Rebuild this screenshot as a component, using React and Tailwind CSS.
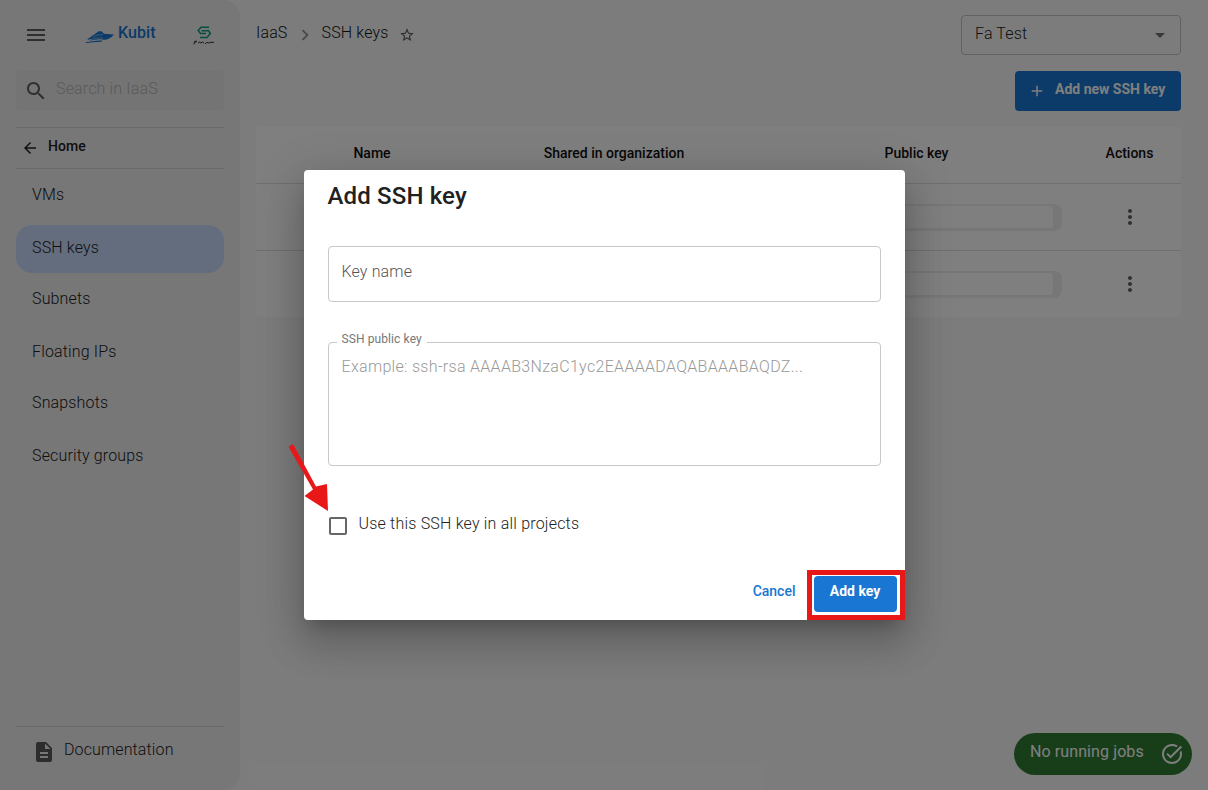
import React from 'react';

const icon = {
  menu: 'M3 18h18v-2H3v2zm0-5h18v-2H3v2zm0-7v2h18V6H3z',
  search:
    'M15.5 14h-.79l-.28-.27C15.41 12.59 16 11.11 16 9.5 16 5.91 13.09 3 9.5 3S3 5.91 3 9.5 5.91 16 9.5 16c1.61 0 3.09-.59 4.23-1.57l.27.28v.79l5 4.99L20.49 19l-4.99-5zm-6 0C7.01 14 5 11.99 5 9.5S7.01 5 9.5 5 14 7.01 14 9.5 11.99 14 9.5 14z',
  back: 'M20 11H7.83l5.59-5.59L12 4l-8 8 8 8 1.41-1.41L7.83 13H20v-2z',
  chevron: 'M10 6 8.59 7.41 13.17 12l-4.58 4.59L10 18l6-6z',
  star: 'M22 9.24l-7.19-.62L12 2 9.19 8.63 2 9.24l5.46 4.73L5.82 21 12 17.27 18.18 21l-1.63-7.03L22 9.24zM12 15.4l-3.76 2.27 1-4.28-3.32-2.88 4.38-.38L12 6.1l1.71 4.04 4.38.38-3.32 2.88 1 4.28L12 15.4z',
  dropdown: 'M7 10l5 5 5-5z',
  add: 'M19 13h-6v6h-2v-6H5v-2h6V5h2v6h6v2z',
  more: 'M12 8c1.1 0 2-.9 2-2s-.9-2-2-2-2 .9-2 2 .9 2 2 2zm0 2c-1.1 0-2 .9-2 2s.9 2 2 2 2-.9 2-2-.9-2-2-2zm0 6c-1.1 0-2 .9-2 2s.9 2 2 2 2-.9 2-2-.9-2-2-2z',
  doc: 'M14 2H6c-1.1 0-1.99.9-1.99 2L4 20c0 1.1.89 2 1.99 2H18c1.1 0 2-.9 2-2V8l-6-6zm2 16H8v-2h8v2zm0-4H8v-2h8v2zm-3-5V3.5L18.5 9H13z',
  done: 'M22 5.18 10.59 16.6l-4.24-4.24 1.41-1.41 2.83 2.83 10-10L22 5.18zm-2.21 5.04c.13.57.21 1.17.21 1.78 0 4.42-3.58 8-8 8s-8-3.58-8-8 3.58-8 8-8c1.58 0 3.04.46 4.28 1.25l1.44-1.44C16.1 2.67 14.13 2 12 2 6.48 2 2 6.48 2 12s4.48 10 10 10 10-4.48 10-10c0-1.19-.22-2.33-.6-3.39l-1.61 1.61z',
  box: 'M19 5v14H5V5h14m0-2H5c-1.1 0-2 .9-2 2v14c0 1.1.9 2 2 2h14c1.1 0 2-.9 2-2V5c0-1.1-.9-2-2-2z',
};

function Icon({ name, className }) {
  return (
    <svg viewBox="0 0 24 24" fill="currentColor" className={`shrink-0 ${className}`}>
      <path d={icon[name]} />
    </svg>
  );
}

function Sidebar() {
  return (
    <aside className="flex w-60 shrink-0 flex-col rounded-r-[16px] bg-[#eeeef0] px-4">
      <div className="flex h-[71px] items-center">
        <Icon name="menu" className="-mt-0.5 ml-2 size-6 text-[#5f5f5f]" />
        <div className="ml-[37px] flex w-[72px] items-center">
          <svg viewBox="0 0 30 14" className="mt-0.5 h-[14px] w-[30px] shrink-0" fill="#1976d2">
            <path d="M3 8.600C5.500 7.600 7.500 5 9.500 4.200L12 2.600C13 1.200 15 .8 17 1.700L19 3.700L29 4.400C26 8 21.500 10.600 17.500 9.600C13 8.800 9 10 4 11L7 9.300L2.500 9.800Z" />
            <path d="M.8 12.500C7 12.400 11 10.500 17 11.200" fill="none" stroke="#1976d2" strokeWidth="1.200" />
            <path d="M7.500 6.900Q12.500 4.300 18 4.600M4 10Q11 7.200 18 8" fill="none" stroke="#eeeef0" strokeWidth=".5" />
          </svg>
          <span className="-mt-[5px] ml-[3px] text-[16px] font-medium tracking-[0.1px] text-[#1976d2]">Kubit</span>
        </div>
        <svg viewBox="0 0 22 20" className="ml-[36px] h-5 w-[22px] shrink-0" fill="none">
          <path d="M16 1.300H8L5.200 4.500L7.500 7.500H13M8.500 4.800H15.500L17.300 7.500L14 11.500H7" stroke="#0d9f83" strokeWidth="1.600" />
          <path d="M1 18.500L1.500 15.500L3.500 15L2.500 16.800M5 17L6.500 16L8 17L9.500 16L11 17M12 18L14 16.300L15.500 17L18 16.300L21 16.300" stroke="#222" strokeWidth=".9" />
        </svg>
      </div>
      <div className="flex h-10 items-center rounded bg-[#e9e9e9] pl-2">
        <Icon name="search" className="size-6 text-[#5f5f5f]" />
        <span className="ml-2 pb-1 text-[16px] font-light tracking-[0.15px] text-[#b4b4b5]">Search in IaaS</span>
      </div>
      <div className="mt-4 flex h-[42px] items-center border-y border-[#d2d2d4] pl-[5px]">
        <Icon name="back" className="size-[18px] text-[#222]" />
        <span className="ml-[9px] pb-[3px] text-[14px] font-medium tracking-[0.1px] text-[#222]">Home</span>
      </div>
      <nav className="flex flex-col text-[16px] font-light tracking-[0.15px] text-[#202020]">
        <div className="flex h-[56px] items-center pb-1 pl-4">VMs</div>
        <div className="flex h-12 items-center rounded-[16px] bg-[#c8dafd] pb-0.5 pl-4">SSH keys</div>
        <div className="flex h-[52px] items-center pl-4">Subnets</div>
        <div className="flex h-[52px] items-center pt-0.5 pl-4">Floating IPs</div>
        <div className="flex h-[52px] items-center pl-4">Snapshots</div>
        <div className="flex h-[52px] items-center pt-0.5 pl-4">Security groups</div>
      </nav>
      <div className="mt-auto mb-3.5 flex h-[50px] items-center border-t border-[#d2d2d4] pl-4">
        <Icon name="doc" className="size-6 text-[#5a5a5a]" />
        <span className="ml-2 pb-1 text-[16px] font-light tracking-[0.12px] text-[#222]">Documentation</span>
      </div>
    </aside>
  );
}

const columns = 'grid grid-cols-[232px_252px_353px_73px]';

function Row() {
  return (
    <div className={`${columns} h-[67px] items-center border-t border-[#dedede]`}>
      <span />
      <span />
      <div className="ml-auto mr-[31px] flex h-[27px] w-[250px] items-center justify-end rounded-[8px] bg-[#eeeef0] pr-[9px]">
        <span className="h-[22px] w-[230px] rounded-[3px] bg-white" />
      </div>
      <Icon name="more" className="mx-auto size-6 text-[#606060]" />
    </div>
  );
}

function Dialog() {
  return (
    <section className="relative flex h-[450px] w-[601px] flex-col rounded bg-white px-6 shadow-[0_11px_15px_-7px_rgba(0,0,0,.2),0_24px_38px_3px_rgba(0,0,0,.14),0_9px_46px_8px_rgba(0,0,0,.12)]">
      <h1 className="mt-[10px] text-[24px] leading-8 font-medium tracking-[0.15px] text-[#212121]">Add SSH key</h1>
      <div className="mt-[34px] flex h-14 items-center rounded border border-[#c8c8c8] px-[13px] pb-1 text-[16px] font-light tracking-[0.15px] text-[#555]">
        Key name
      </div>
      <fieldset className="mt-[30px] h-[134px] rounded border border-[#c8c8c8] px-[8px]">
        <legend className="h-5 px-[5px] text-[12px] leading-[14px] tracking-[0.1px] text-[#777]">SSH public key</legend>
        <p className="px-[5px] pt-[3px] text-[16px] leading-6 font-light tracking-[0.31px] text-[#999]">
          Example: ssh-rsa AAAAB3NzaC1yc2EAAAADAQABAAABAQDZ...
        </p>
      </fieldset>
      <label className="mt-[48px] flex h-6 items-center">
        <Icon name="box" className="-ml-[2px] size-6 text-[#666]" />
        <span className="ml-[9px] pb-1 text-[16px] font-light tracking-[0.2px] text-[#222]">Use this SSH key in all projects</span>
      </label>
      <div className="-mr-[24px] mt-auto flex items-center justify-end">
        <span className="mr-[11px] pb-[7px] text-[14px] font-medium text-[#1976d2]">Cancel</span>
        <div className="border-[5px] border-[#e81818] bg-white pt-px pr-[3px] pb-[3px] pl-[2px]">
          <button className="flex h-9 w-[83px] justify-center rounded bg-[#1976d2] pt-[5px] text-[14px] leading-5 font-bold text-white">Add key</button>
        </div>
      </div>
    </section>
  );
}

export default function App() {
  return (
    <div className="relative flex h-[790px] w-[1208px] overflow-hidden bg-[#f9f9fb] font-['Roboto',sans-serif]">
      <Sidebar />
      <main className="flex flex-1 flex-col pt-[15px] pr-[27px] pl-4">
        <header className="flex h-10 items-center justify-between">
          <div className="flex items-center text-[16px] font-light tracking-[0.15px] text-[#111]">
            <span className="pb-1">IaaS</span>
            <Icon name="chevron" className="ml-[6px] size-[22px] text-[#929292]" />
            <span className="ml-[6px] pb-1">SSH keys</span>
            <Icon name="star" className="ml-[10px] size-4 text-[#555]" />
          </div>
          <div className="flex h-10 w-[220px] items-center justify-between rounded border border-[#c3c3c5] pr-2 pl-[13px]">
            <span className="pb-0.5 text-[16px] font-light tracking-[0.15px] text-[#222]">Fa Test</span>
            <Icon name="dropdown" className="size-6 text-[#707070]" />
          </div>
        </header>
        <button className="mt-4 ml-auto flex h-10 w-[166px] items-center rounded bg-[#1976d2] pl-[13px] text-white">
          <Icon name="add" className="size-[18px]" />
          <span className="ml-[9px] pb-[3px] text-[14px] font-bold">Add new SSH key</span>
        </button>
        <section className="mt-4 rounded bg-white">
          <div className={`${columns} h-14 items-center pb-[3px] text-center text-[14px] font-medium text-[#111]`}>
            <span>Name</span>
            <span>Shared in organization</span>
            <span>Public key</span>
            <span>Actions</span>
          </div>
          <Row />
          <Row />
        </section>
        <div className="mt-auto mb-[15px] -mr-[11px] flex h-[42px] w-[178px] items-center self-end rounded-full bg-[#2e7d32] pl-4 text-white">
          <span className="pb-1 text-[16px] tracking-[0.1px]">No running jobs</span>
          <Icon name="done" className="ml-auto mr-[8px] size-6" />
        </div>
      </main>
      <div className="absolute inset-0 flex items-center justify-center bg-black/50">
        <Dialog />
      </div>
      <svg viewBox="0 0 40 70" className="absolute top-[443px] left-[289px] h-[70px] w-10" fill="#e81818">
        <path d="M-.5 3.500L4 1L27 43.500L38 41L39 68L15.500 53L24 46.500Z" />
      </svg>
    </div>
  );
}
